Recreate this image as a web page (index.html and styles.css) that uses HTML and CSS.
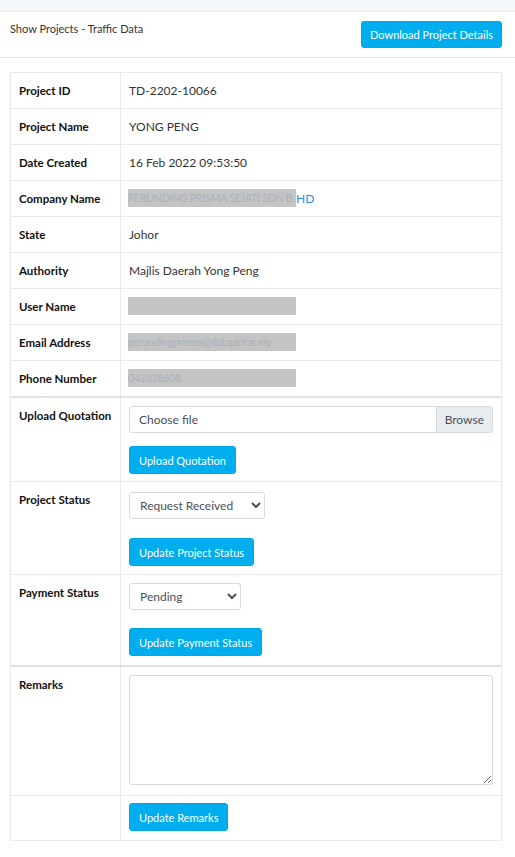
FILE: index.html
```html
<!DOCTYPE html>
<html>
<head>
  <title>Show Projects - Traffic Data</title>
  <meta name="viewport" content="width=device-width, initial-scale=1">
  <link rel="stylesheet" href="styles.css">
</head>
<body>
  <div class="topbar"></div>
  <div class="card">
    <div class="card-header">
      <span class="card-title">Show Projects - Traffic Data</span>
      <button type="button" class="btn">Download Project Details</button>
    </div>
    <div class="card-body">
      <table class="details">
        <tbody>
          <tr><th>Project ID</th><td>TD-2202-10066</td></tr>
          <tr><th>Project Name</th><td>YONG PENG</td></tr>
          <tr><th>Date Created</th><td>16 Feb 2022 09:53:50</td></tr>
          <tr><th>Company Name</th><td><a href="#" class="link"><span class="redact">PERUNDING PRISMA SEJATI SDN B</span>HD</a></td></tr>
          <tr><th>State</th><td>Johor</td></tr>
          <tr><th>Authority</th><td>Majlis Daerah Yong Peng</td></tr>
          <tr><th>User Name</th><td><span class="redact"></span></td></tr>
          <tr><th>Email Address</th><td><span class="redact">perundingprisma@datapintar.my</span></td></tr>
          <tr><th>Phone Number</th><td><span class="redact">042828608</span></td></tr>
        </tbody>
        <tbody class="split">
          <tr>
            <th>Upload Quotation</th>
            <td class="upload-cell">
              <div class="stack gap-13">
                <label class="file-field">
                  <input type="file" class="file-hidden">
                  <span class="file-text">Choose file</span>
                  <span class="file-browse">Browse</span>
                </label>
                <button type="button" class="btn">Upload Quotation</button>
              </div>
            </td>
          </tr>
          <tr>
            <th>Project Status</th>
            <td class="project-cell">
              <div class="stack gap-19">
                <select class="select project-select">
                  <option>Request Received</option>
                  <option>In Progress</option>
                  <option>Completed</option>
                </select>
                <button type="button" class="btn">Update Project Status</button>
              </div>
            </td>
          </tr>
          <tr>
            <th>Payment Status</th>
            <td class="payment-cell">
              <div class="stack gap-18">
                <select class="select payment-select">
                  <option>Pending</option>
                  <option>Paid</option>
                </select>
                <button type="button" class="btn">Update Payment Status</button>
              </div>
            </td>
          </tr>
        </tbody>
        <tbody class="split">
          <tr>
            <th>Remarks</th>
            <td class="remarks-cell"><textarea class="remarks"></textarea></td>
          </tr>
          <tr>
            <th></th>
            <td class="last-cell"><button type="button" class="btn">Update Remarks</button></td>
          </tr>
        </tbody>
      </table>
    </div>
  </div>
</body>
</html>
```

FILE: styles.css
```css
/* base */
body {
  margin: 0;
  background-color: #fff;
  font-family: Lato, "Liberation Sans", sans-serif;
  font-size: 12px;
  color: #212529;
}

.topbar {
  height: 11px;
  background-color: #f4f6f9;
  border-bottom: 1px solid #eceef1;
}

/* card header */
.card-header {
  display: flex;
  justify-content: space-between;
  align-items: flex-start;
  padding: 9px 13px 9px 10px;
  border-bottom: 1px solid #e3e5e8;
}

.card-title {
  font-size: 11px;
  line-height: 16px;
  color: #333;
}

.btn {
  display: block;
  font-family: inherit;
  font-size: 11px;
  color: #fff;
  background-color: #00aeef;
  border: 1px solid #00a8e8;
  border-radius: 3px;
  height: 28px;
  padding: 0 9px;
  cursor: pointer;
}

.card-header .btn {
  height: 27px;
  padding: 0 8px;
}

/* card body / table */
.card-body {
  padding: 14px 13px 17px 10px;
}

.details {
  width: 100%;
  border-collapse: collapse;
}

.details th,
.details td {
  border: 1px solid #e8eaed;
  padding: 11px 8px;
  line-height: 13px;
  text-align: left;
  vertical-align: top;
}

.details th {
  width: 93px;
  font-size: 11.5px;
  font-weight: bold;
  color: #111;
  white-space: nowrap;
}

.details td {
  color: #333;
}

.details tbody.split {
  border-top: 2px solid #dfe2e6;
}

.link {
  color: #2a8cf0;
  text-decoration: none;
}

.redact {
  display: inline-block;
  width: 168px;
  height: 18px;
  margin: -3px 0 -2px -1px;
  line-height: 18px;
  font-size: 10.5px;
  letter-spacing: -0.2px;
  background-color: #c4c4c4;
  color: #a9b2bd;
  white-space: nowrap;
  overflow: hidden;
  vertical-align: top;
}

/* form cells */
.stack {
  display: flex;
  flex-direction: column;
  align-items: flex-start;
}

.gap-13 { gap: 13px; }
.gap-18 { gap: 18px; }
.gap-19 { gap: 19px; }

.details td.upload-cell {
  padding-top: 8px;
  padding-bottom: 7px;
}

.details td.project-cell {
  padding-top: 10px;
  padding-bottom: 8px;
}

.details td.payment-cell {
  padding-top: 8px;
  padding-bottom: 9px;
}

.details td.remarks-cell {
  padding-top: 8px;
  padding-bottom: 10px;
}

.details td.last-cell {
  padding-top: 7px;
  padding-bottom: 9px;
}

.file-field {
  display: flex;
  width: 100%;
  height: 27px;
  box-sizing: border-box;
  border: 1px solid #d6dade;
  border-radius: 3px;
  overflow: hidden;
  cursor: pointer;
}

.file-hidden {
  display: none;
}

.file-text {
  flex: 1;
  padding: 0 9px;
  line-height: 25px;
  color: #495057;
}

.file-browse {
  padding: 0 8px;
  line-height: 25px;
  background-color: #e9ecef;
  border-left: 1px solid #d6dade;
  color: #495057;
}

.select {
  font-family: inherit;
  font-size: 12px;
  color: #495057;
  height: 27px;
  background-color: #fff;
  border: 1px solid #d6dade;
  border-radius: 3px;
  padding: 0 6px;
}

.project-select {
  width: 136px;
}

.payment-select {
  width: 112px;
}

.remarks {
  display: block;
  width: 100%;
  height: 110px;
  box-sizing: border-box;
  border: 1px solid #d6dade;
  border-radius: 3px;
  font-family: inherit;
}
```
